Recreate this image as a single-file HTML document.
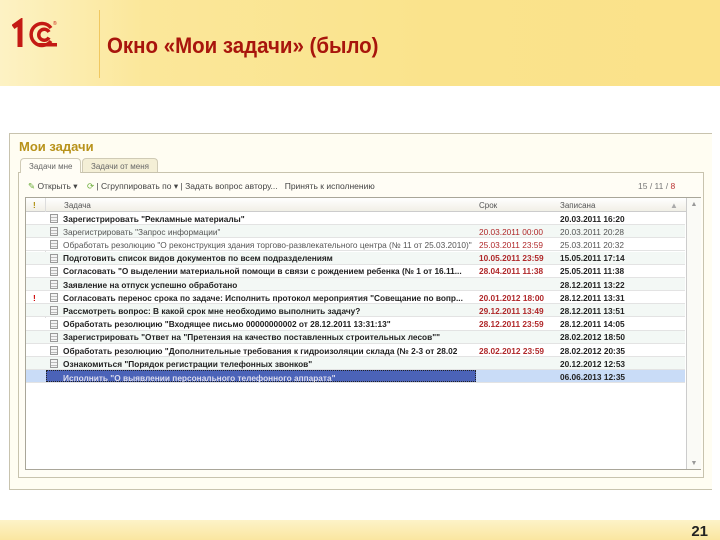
<!DOCTYPE html>
<html><head><meta charset="utf-8"><style>
*{margin:0;padding:0;box-sizing:border-box}
body{width:720px;height:540px;position:relative;background:#fff;font-family:"Liberation Sans",sans-serif;overflow:hidden}
.hdr{position:absolute;left:0;top:0;width:720px;height:86px;background:linear-gradient(90deg,#fdf2c4 0%,#fbe79a 20%,#fae38c 60%,#fbe28a 100%)}
.hdr .line{position:absolute;left:99px;top:10px;width:1px;height:68px;background:#f0c860}
.title{position:absolute;left:107px;top:33px;font-size:22px;font-weight:bold;color:#a8150c;font-family:"Liberation Sans",sans-serif;transform:scaleX(0.93);transform-origin:left}
.foot{position:absolute;left:0;top:520px;width:720px;height:20px;background:linear-gradient(180deg,#fdf3c8,#fae6a0)}
.num{position:absolute;right:12px;top:523px;font-weight:bold;font-size:15px;color:#222}
.win{position:absolute;left:9px;top:133px;width:703px;height:357px;border:1px solid #c8c3ae;border-right:none;background:#fffdf2}
.mt{position:absolute;left:19px;top:139px;font-size:13px;color:#b8921a;font-weight:bold}
.tab{position:absolute;top:158px;height:15px;font-size:8px;color:#666;padding:3px 8px;border:1px solid #d0cbb6;border-bottom:none;border-radius:4px 4px 0 0}
.panel{position:absolute;left:18px;top:172px;width:686px;height:306px;border:1px solid #c8c3ae;background:#fffdf5}
.tb{position:absolute;top:181px;font-size:8.5px;color:#444;white-space:nowrap}
.grid{position:absolute;left:25px;top:197px;width:676px;height:273px;border:1px solid #a9a699;background:#fff}
.th{position:absolute;top:0;height:14px;border-bottom:1px solid #ccc;background:linear-gradient(#fff,#f1efe6);font-size:8px;color:#555;width:100%}
.th span{position:absolute;top:3px}
.row{position:absolute;left:0;width:659px;height:13px;font-size:8.3px;white-space:nowrap;border-bottom:1px solid #e3e3e3}
.row span{position:absolute;top:1.5px}
.ic{position:absolute;left:24px;top:2px;width:8px;height:9px;border:1px solid #999;background:repeating-linear-gradient(#f4f4f4 0 2px,#bbb 2px 3px)}
.sb{position:absolute;left:660px;top:0;width:15px;height:271px;border-left:1px solid #ccc;background:#fafaf6}
</style></head><body>
<div class="hdr"><div class="line"></div>
<svg style="position:absolute;left:12px;top:18px" width="48" height="34" viewBox="0 0 48 34"><path d="M1 9 L8 4 L8 29" stroke="#c41a14" stroke-width="5" fill="none"/><path d="M39 10 A11 11 0 1 0 39 23 M37 14 A5.5 5.5 0 1 0 37 19.5" stroke="#c41a14" stroke-width="3.5" fill="none"/><rect x="26" y="25" width="19" height="3.5" fill="#c41a14"/><text x="41" y="7" font-size="5" fill="#c41a14">®</text></svg>
<div class="title">Окно «Мои задачи» (было)</div></div>
<div class="win"></div>
<div class="mt">Мои задачи</div>
<div class="tab" style="left:20px;background:#fffdf5;z-index:2;height:15px">Задачи мне</div>
<div class="tab" style="left:82px;background:#f4efd6">Задачи от меня</div>
<div class="panel"></div>
<div class="tb" style="left:28px"><span style="color:#6a3">✎</span> Открыть ▾ &nbsp;&nbsp; <span style="color:#6a3">⟳</span> | Сгруппировать по ▾ | Задать вопрос автору... &nbsp; Принять к исполнению</div>
<div class="tb" style="left:638px;color:#777">15 / 11 / <span style="color:#b33">8</span></div>
<div class="grid">
<div class="th"><span style="left:7px;color:#a80;font-weight:bold">!</span><span style="left:38px">Задача</span><span style="left:453px">Срок</span><span style="left:534px">Записана</span><span style="left:644px;color:#aaa">▲</span></div>
<div style="position:absolute;left:19px;top:0;width:1px;height:185px;background:#ddd"></div>
<div class="sb"><div style="font-size:7px;color:#999;text-align:center;margin-top:3px">▲</div><div style="position:absolute;bottom:2px;width:100%;font-size:7px;color:#999;text-align:center">▼</div></div>
<div id="rows"></div>
</div>
<div class="foot"></div><div class="num">21</div>
<script>
var d=[
["Зарегистрировать \"Рекламные материалы\"","","20.03.2011 16:20",1,0],
["Зарегистрировать \"Запрос информации\"","20.03.2011 00:00","20.03.2011 20:28",0,0],
["Обработать резолюцию \"О реконструкция здания торгово-развлекательного центра (№ 11 от 25.03.2010)\"","25.03.2011 23:59","25.03.2011 20:32",0,0],
["Подготовить список видов документов по всем подразделениям","10.05.2011 23:59","15.05.2011 17:14",1,0],
["Согласовать \"О выделении материальной помощи в связи с рождением ребенка (№ 1 от 16.11...","28.04.2011 11:38","25.05.2011 11:38",1,0],
["Заявление на отпуск успешно обработано","","28.12.2011 13:22",1,0],
["Согласовать перенос срока по задаче: Исполнить протокол мероприятия \"Совещание по вопр...","20.01.2012 18:00","28.12.2011 13:31",1,1],
["Рассмотреть вопрос: В какой срок мне необходимо выполнить задачу?","29.12.2011 13:49","28.12.2011 13:51",1,0],
["Обработать резолюцию \"Входящее письмо 00000000002 от 28.12.2011 13:31:13\"","28.12.2011 23:59","28.12.2011 14:05",1,0],
["Зарегистрировать \"Ответ на \"Претензия на качество поставленных строительных лесов\"\"","","28.02.2012 18:50",1,0],
["Обработать резолюцию \"Дополнительные требования к гидроизоляции склада (№ 2-3 от 28.02","28.02.2012 23:59","28.02.2012 20:35",1,0],
["Ознакомиться \"Порядок регистрации телефонных звонков\"","","20.12.2012 12:53",1,0],
["Исполнить \"О выявлении персонального телефонного аппарата\"","","06.06.2013 12:35",1,2]];
var h="";
d.forEach(function(r,i){var t=14+i*13.2;var bg=r[4]==2?"#c9dcf7":(i%2?"#f3f8f5":"#fff");
h+='<div class="row" style="top:'+t+'px;background:'+bg+';font-weight:'+(r[3]?'bold':'normal')+';color:'+(r[3]?'#222':'#555')+'">';
if(r[4]==1)h+='<span style="left:7px;color:#c00">!</span>';
h+='<div class="ic"></div>';
if(r[4]==2)h+='<span style="left:20px;top:0;width:430px;height:12px;background:#4b63b8;color:#dde;padding:1.5px 16px;border:1px dotted #222">'+r[0]+'</span>';
else h+='<span style="left:37px;max-width:412px;overflow:hidden">'+r[0]+'</span>';
h+='<span style="left:453px;color:#b0282a">'+r[1]+'</span><span style="left:534px">'+r[2]+'</span></div>';});
document.getElementById('rows').innerHTML=h;
</script>
</body></html>
